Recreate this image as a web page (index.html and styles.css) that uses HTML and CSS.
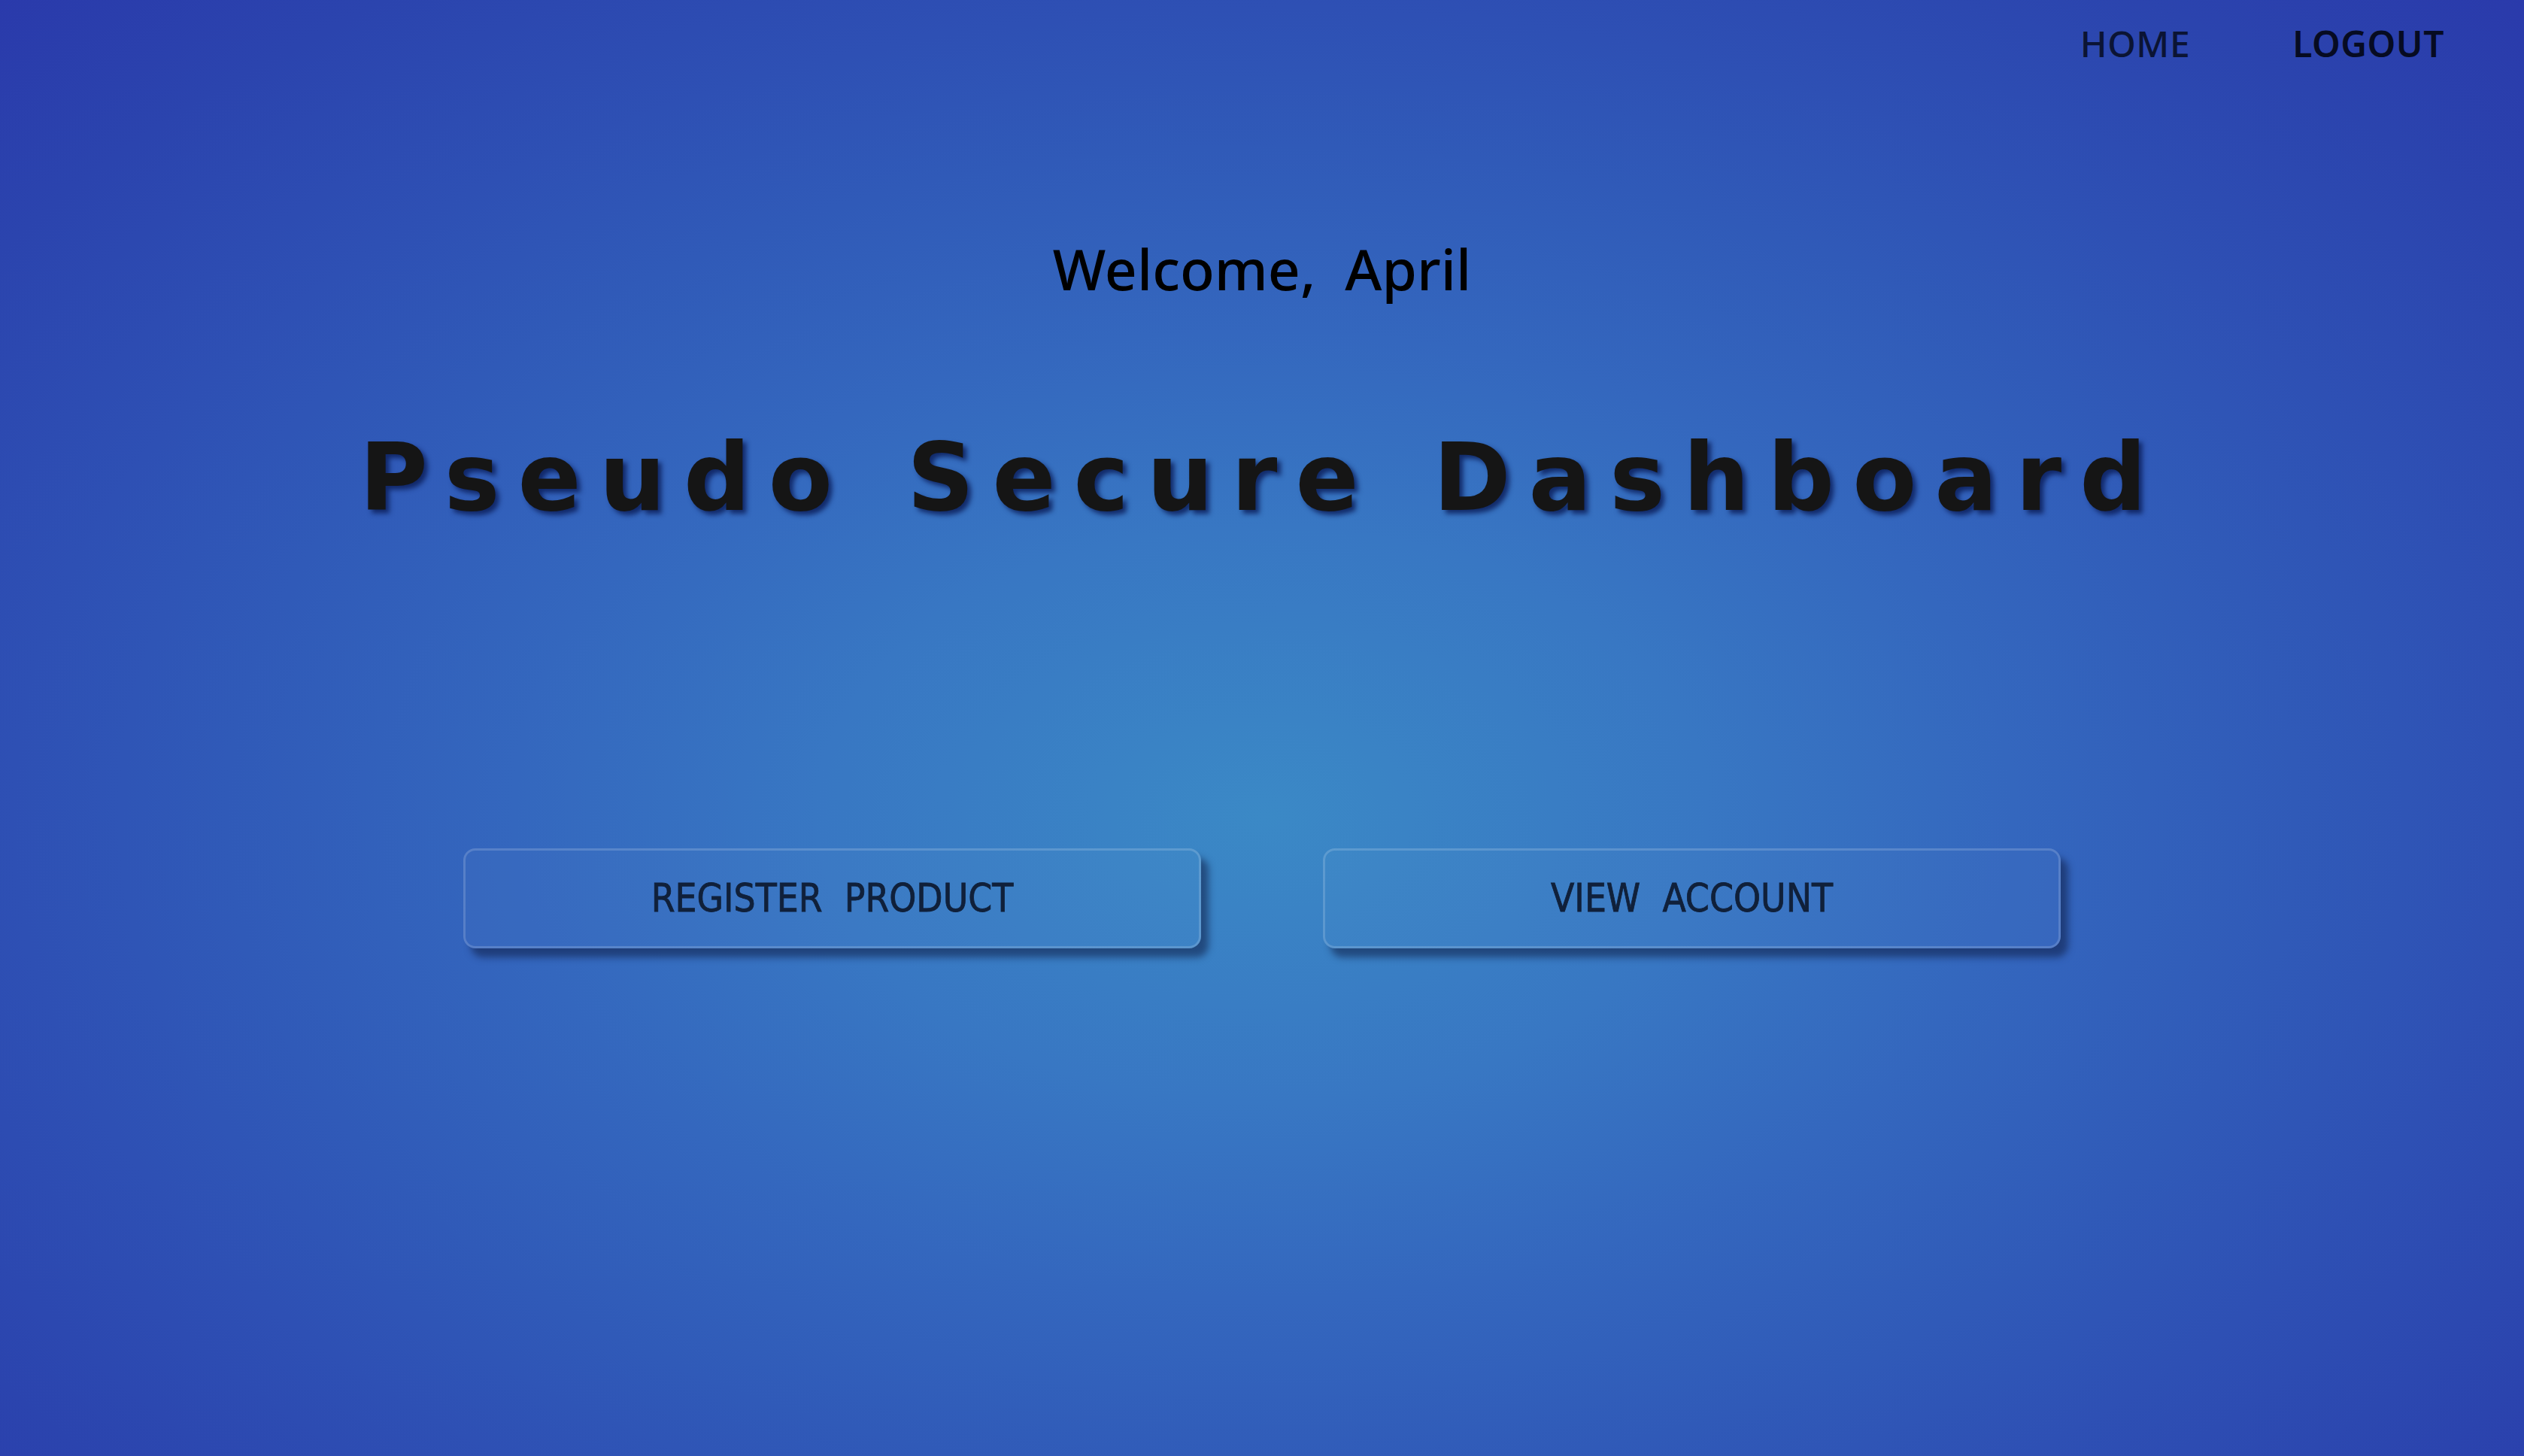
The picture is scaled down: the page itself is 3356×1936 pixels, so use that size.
FILE: index.html
```html
<!DOCTYPE html>
<html lang="en">
<head>
<meta charset="utf-8">
<title>Pseudo Secure Dashboard</title>
<link rel="stylesheet" href="styles.css">
</head>
<body>
<div class="page">
  <nav class="nav">
    <a class="nav-link nav-home" href="#">HOME</a>
    <a class="nav-link nav-logout" href="#">LOGOUT</a>
  </nav>
  <h2 class="welcome">Welcome,&nbsp; April</h2>
  <h1 class="title">Pseudo Secure Dashboard</h1>
  <div class="actions">
    <button class="action-btn">REGISTER&nbsp; PRODUCT</button>
    <button class="action-btn">VIEW&nbsp; ACCOUNT</button>
  </div>
</div>
</body>
</html>
```
FILE: styles.css
```css
html, body {
  margin: 0;
  padding: 0;
  height: 100%;
}
body {
  background: radial-gradient(ellipse farthest-corner at 50% 56%, #3b89c6 0%, #3877c3 25%, #3467be 42%, #305ab8 58%, #2e50b4 70%, #2b44ae 86%, #2a3aab 100%);
  font-family: "Noto Sans", sans-serif;
  overflow: hidden;
}
.page {
  display: flex;
  flex-direction: column;
  align-items: center;
  height: 100%;
}
.nav {
  align-self: stretch;
  display: flex;
  justify-content: flex-end;
  gap: 136px;
  padding: 34px 106px 0 0;
}
.nav-link {
  font-family: "Noto Sans", sans-serif;
  font-size: 48px;
  line-height: 1;
  font-weight: 500;
  text-decoration: none;
  color: #0b1434;
  letter-spacing: 0.5px;
}
.nav-logout {
  color: #060b22;
  font-weight: 600;
}
.welcome {
  margin: 238px 0 0;
  font-family: "Noto Sans", sans-serif;
  font-size: 75px;
  line-height: 1;
  font-weight: 500;
  color: #000;
}
.title {
  margin: 178px 0 0;
  font-family: "DejaVu Sans", sans-serif;
  font-size: 124px;
  line-height: 1;
  font-weight: bold;
  color: #151515;
  letter-spacing: 24px;
  word-spacing: 8px;
  text-shadow: 5px 5px 6px rgba(12, 30, 90, 0.85);
}
.actions {
  margin-top: 431px;
  display: flex;
  gap: 162px;
}
.action-btn {
  width: 981px;
  height: 133px;
  box-sizing: border-box;
  border: 3px solid rgba(255, 255, 255, 0.16);
  border-radius: 16px;
  background: rgba(255, 255, 255, 0.02);
  box-shadow: 10px 12px 10px rgba(15, 30, 70, 0.55);
  font-family: "DejaVu Sans Condensed", "DejaVu Sans", sans-serif;
  font-stretch: condensed;
  font-size: 51px;
  color: #10203a;
  -webkit-text-stroke: 0.8px #10203a;
  cursor: pointer;
}
```
